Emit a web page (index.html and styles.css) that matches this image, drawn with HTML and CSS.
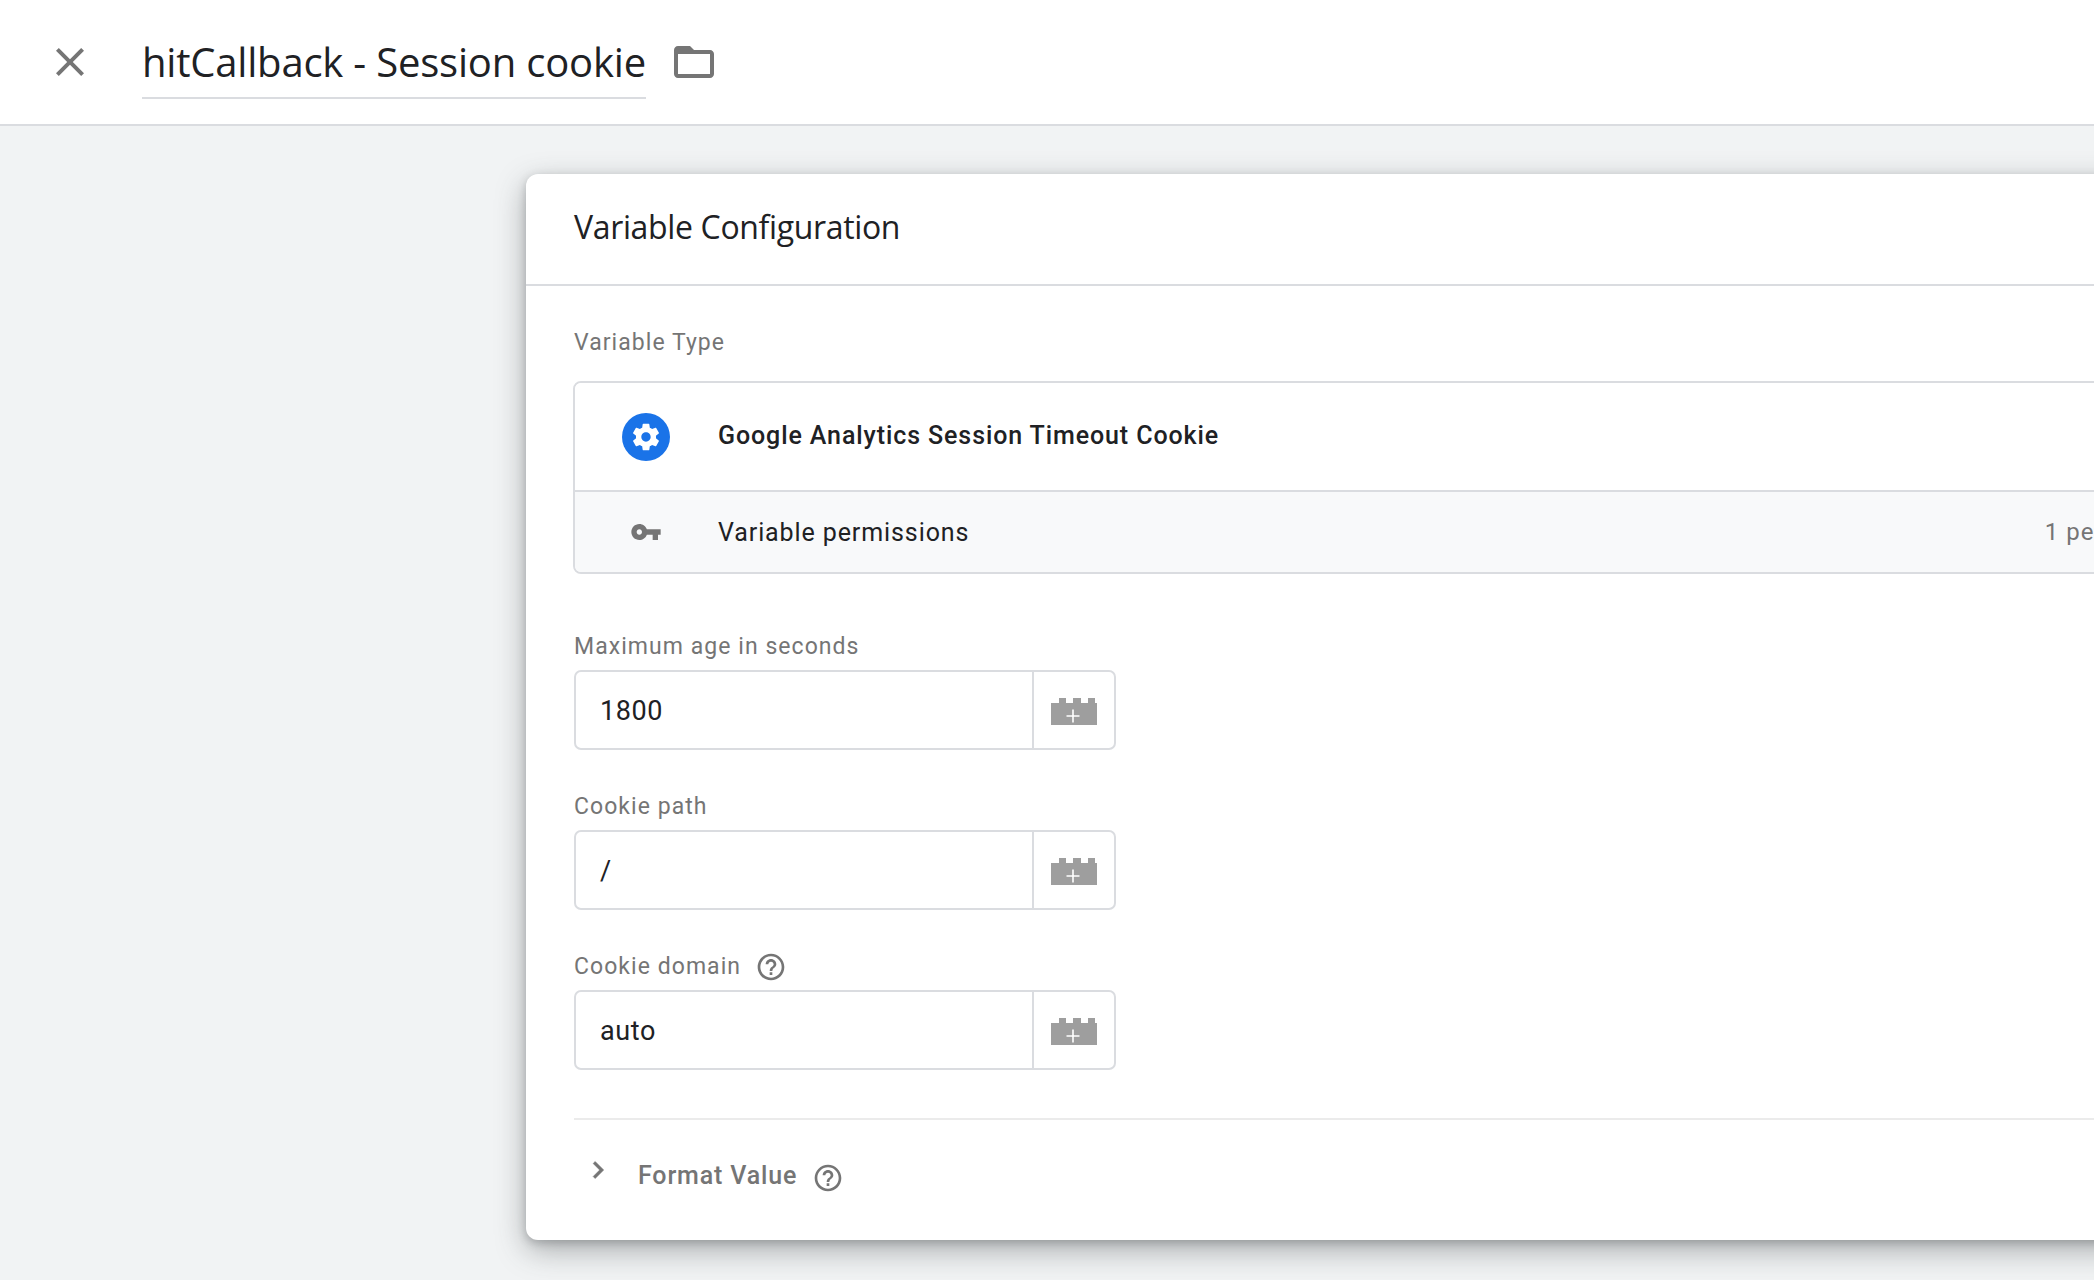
FILE: index.html
```html
<!DOCTYPE html>
<html lang="en">
<head>
<meta charset="utf-8">
<title>hitCallback - Session cookie</title>
<link rel="stylesheet" href="styles.css">
</head>
<body>
<header class="topbar">
  <svg class="icon-close" viewBox="0 0 24 24"><path d="M19 6.41L17.59 5 12 10.59 6.41 5 5 6.41 10.59 12 5 17.59 6.41 19 12 13.41 17.59 19 19 17.59 13.41 12z"/></svg>
  <div class="title">hitCallback - Session cookie</div>
  <svg class="icon-folder" viewBox="0 0 24 24"><path d="M20 6h-8l-2-2H4c-1.1 0-1.99.9-1.99 2L2 18c0 1.1.9 2 2 2h16c1.1 0 2-.9 2-2V8c0-1.1-.9-2-2-2zm0 12H4V8h16v10z"/></svg>
</header>
<main class="canvas">
  <section class="card">
    <div class="card-head">Variable Configuration</div>
    <div class="card-body">
      <div class="label type-label">Variable Type</div>
      <div class="type-box">
        <div class="type-row">
          <span class="type-icon"><svg viewBox="0 0 24 24"><path d="M19.43 12.98c.04-.32.07-.64.07-.98s-.03-.66-.07-.98l2.11-1.65c.19-.15.24-.42.12-.64l-2-3.46c-.12-.22-.39-.3-.61-.22l-2.49 1c-.52-.4-1.08-.73-1.69-.98l-.38-2.65C14.46 2.18 14.25 2 14 2h-4c-.25 0-.46.18-.49.42l-.38 2.65c-.61.25-1.17.59-1.69.98l-2.49-1c-.23-.09-.49 0-.61.22l-2 3.46c-.13.22-.07.49.12.64l2.11 1.65c-.04.32-.07.65-.07.98s.03.66.07.98l-2.11 1.65c-.19.15-.24.42-.12.64l2 3.46c.12.22.39.3.61.22l2.49-1c.52.4 1.08.73 1.69.98l.38 2.65c.03.24.24.42.49.42h4c.25 0 .46-.18.49-.42l.38-2.65c.61-.25 1.17-.59 1.69-.98l2.49 1c.23.09.49 0 .61-.22l2-3.46c.12-.22.07-.49-.12-.64l-2.11-1.65zM12 15.5c-1.93 0-3.5-1.57-3.5-3.5s1.57-3.5 3.5-3.5 3.5 1.57 3.5 3.5-1.57 3.5-3.5 3.5z"/></svg></span>
          <span class="type-name">Google Analytics Session Timeout Cookie</span>
        </div>
        <div class="perm-row">
          <svg class="icon-key" viewBox="0 0 24 24"><path d="M12.65 10C11.83 7.67 9.61 6 7 6c-3.31 0-6 2.69-6 6s2.69 6 6 6c2.61 0 4.83-1.67 5.65-4H17v4h4v-4h2v-4H12.65zM7 14c-1.1 0-2-.9-2-2s.9-2 2-2 2 .9 2 2-.9 2-2 2z"/></svg>
          <span class="perm-name">Variable permissions</span>
          <span class="perm-count">1 permission</span>
        </div>
      </div>

      <div class="field field-first">
        <div class="label">Maximum age in seconds</div>
        <div class="input-box">
          <div class="input-value">1800</div>
          <div class="input-action"><svg class="icon-brick" viewBox="0 0 46 27"><path d="M0 5h8V0h7v5h7V0h8v5h7V0h7v5h2v22H0z"/><path class="brick-plus" d="M21.2 11.5h1.6v5.7h5.7v1.6h-5.7v5.7h-1.6v-5.7h-5.7v-1.6h5.7z"/></svg></div>
        </div>
      </div>

      <div class="field">
        <div class="label">Cookie path</div>
        <div class="input-box">
          <div class="input-value">/</div>
          <div class="input-action"><svg class="icon-brick" viewBox="0 0 46 27"><path d="M0 5h8V0h7v5h7V0h8v5h7V0h7v5h2v22H0z"/><path class="brick-plus" d="M21.2 11.5h1.6v5.7h5.7v1.6h-5.7v5.7h-1.6v-5.7h-5.7v-1.6h5.7z"/></svg></div>
        </div>
      </div>

      <div class="field">
        <div class="label">Cookie domain
          <svg class="icon-help" viewBox="0 0 24 24"><path d="M11 18h2v-2h-2v2zm1-16C6.48 2 2 6.48 2 12s4.48 10 10 10 10-4.48 10-10S17.52 2 12 2zm0 18c-4.41 0-8-3.59-8-8s3.59-8 8-8 8 3.59 8 8-3.59 8-8 8zm0-14c-2.21 0-4 1.79-4 4h2c0-1.1.9-2 2-2s2 .9 2 2c0 2-3 1.75-3 5h2c0-2.25 3-2.5 3-5 0-2.21-1.79-4-4-4z"/></svg>
        </div>
        <div class="input-box">
          <div class="input-value">auto</div>
          <div class="input-action"><svg class="icon-brick" viewBox="0 0 46 27"><path d="M0 5h8V0h7v5h7V0h8v5h7V0h7v5h2v22H0z"/><path class="brick-plus" d="M21.2 11.5h1.6v5.7h5.7v1.6h-5.7v5.7h-1.6v-5.7h-5.7v-1.6h5.7z"/></svg></div>
        </div>
      </div>

      <div class="format-row">
        <svg class="icon-chevron" viewBox="0 0 24 24"><path d="M10 6L8.59 7.41 13.17 12l-4.58 4.59L10 18l6-6z"/></svg>
        <span class="format-name">Format Value</span>
        <svg class="icon-help icon-help-low" viewBox="0 0 24 24"><path d="M11 18h2v-2h-2v2zm1-16C6.48 2 2 6.48 2 12s4.48 10 10 10 10-4.48 10-10S17.52 2 12 2zm0 18c-4.41 0-8-3.59-8-8s3.59-8 8-8 8 3.59 8 8-3.59 8-8 8zm0-14c-2.21 0-4 1.79-4 4h2c0-1.1.9-2 2-2s2 .9 2 2c0 2-3 1.75-3 5h2c0-2.25 3-2.5 3-5 0-2.21-1.79-4-4-4z"/></svg>
      </div>
    </div>
  </section>
</main>
</body>
</html>
```

FILE: styles.css
```css
* { box-sizing: border-box; }
html, body { margin: 0; height: 100%; }
body {
  width: 2094px;
  height: 1280px;
  overflow: hidden;
  background: #f1f3f4;
  font-family: Roboto, "Liberation Sans", sans-serif;
  color: #202124;
}
svg { display: block; flex: none; }

.topbar {
  height: 126px;
  background: #fff;
  border-bottom: 2px solid #dadce0;
  display: flex;
  align-items: center;
  padding-left: 46px;
}
.icon-close { width: 48px; height: 48px; fill: #757575; }
.title {
  margin-left: 48px;
  height: 72px;
  padding-top: 11px;
  line-height: 48px;
  margin-top: 2px;
  font-family: "Open Sans", sans-serif;
  font-size: 40px;
  letter-spacing: -0.2px;
  color: #202124;
  border-bottom: 2px solid #dadce0;
  white-space: nowrap;
}
.icon-folder { width: 48px; height: 48px; fill: #757575; margin-left: 24px; }

.canvas { padding: 48px 0 0 526px; }
.card {
  width: 1743px;
  height: 1066px;
  background: #fff;
  border-radius: 12px;
  box-shadow: 0 10px 30px rgba(60, 64, 67, .4), 0 3px 8px rgba(60, 64, 67, .25);
}
.card-head {
  height: 112px;
  padding-left: 48px;
  line-height: 106px;
  font-family: "Open Sans", sans-serif;
  font-size: 32px;
  letter-spacing: -0.35px;
  border-bottom: 2px solid #dadce0;
}
.card-body { padding: 0 48px; }

.label {
  height: 26px;
  line-height: 26px;
  font-size: 23px;
  letter-spacing: 1.05px;
  color: #757575;
  display: flex;
  align-items: center;
}
.type-label { margin-top: 44px; }

.type-box {
  margin: 25px 0 0 -1px;
  height: 193px;
  border: 2px solid #dadce0;
  border-radius: 8px;
  overflow: hidden;
}
.type-row {
  height: 107px;
  padding-bottom: 2px;
  display: flex;
  align-items: center;
  background: #fff;
}
.type-icon {
  width: 48px;
  height: 48px;
  margin: 3px 0 0 47px;
  border-radius: 50%;
  background: #1a73e8;
  display: flex;
  align-items: center;
  justify-content: center;
}
.type-icon svg { width: 32px; height: 32px; fill: #fff; }
.type-name {
  margin-left: 48px;
  font-size: 25px;
  font-weight: 500;
  letter-spacing: .9px;
  color: #202124;
}
.perm-row {
  height: 82px;
  display: flex;
  align-items: center;
  background: #f8f9fa;
  border-top: 2px solid #dadce0;
}
.icon-key { width: 32px; height: 32px; fill: #757575; margin-left: 55px; }
.perm-name {
  margin-left: 56px;
  font-size: 25px;
  letter-spacing: .9px;
  color: #202124;
}
.perm-count {
  margin-left: auto;
  margin-right: 24px;
  font-size: 24px;
  letter-spacing: 1px;
  color: #757575;
}

.field { margin-top: 44px; width: 542px; }
.field-first { margin-top: 60px; }
.input-box {
  margin-top: 10px;
  height: 80px;
  border: 2px solid #dadce0;
  border-radius: 7px;
  display: flex;
  background: #fff;
}
.input-value {
  flex: 1;
  padding-left: 24px;
  line-height: 79px;
  font-size: 27px;
  letter-spacing: .6px;
  color: #202124;
}
.input-action {
  width: 82px;
  border-left: 2px solid #dadce0;
  display: flex;
  align-items: center;
  justify-content: center;
  padding-top: 2px;
}
.icon-brick { width: 46px; height: 27px; fill: #9e9e9e; }
.brick-plus { fill: #fff; }
.icon-help { width: 32px; height: 32px; fill: #757575; margin-left: 14px; }

.format-row {
  margin-top: 48px;
  height: 119px;
  border-top: 2px solid #ebebeb;
  display: flex;
  align-items: center;
  padding-bottom: 6px;
}
.icon-chevron { width: 34px; height: 34px; fill: #757575; stroke: #757575; stroke-width: .4; margin: -12px 0 0 7px; }
.format-name {
  margin-left: 23px;
  font-size: 25px;
  font-weight: 500;
  letter-spacing: .85px;
  color: #757575;
}
.icon-help-low { margin-top: 4px; margin-left: 15px; }
```
